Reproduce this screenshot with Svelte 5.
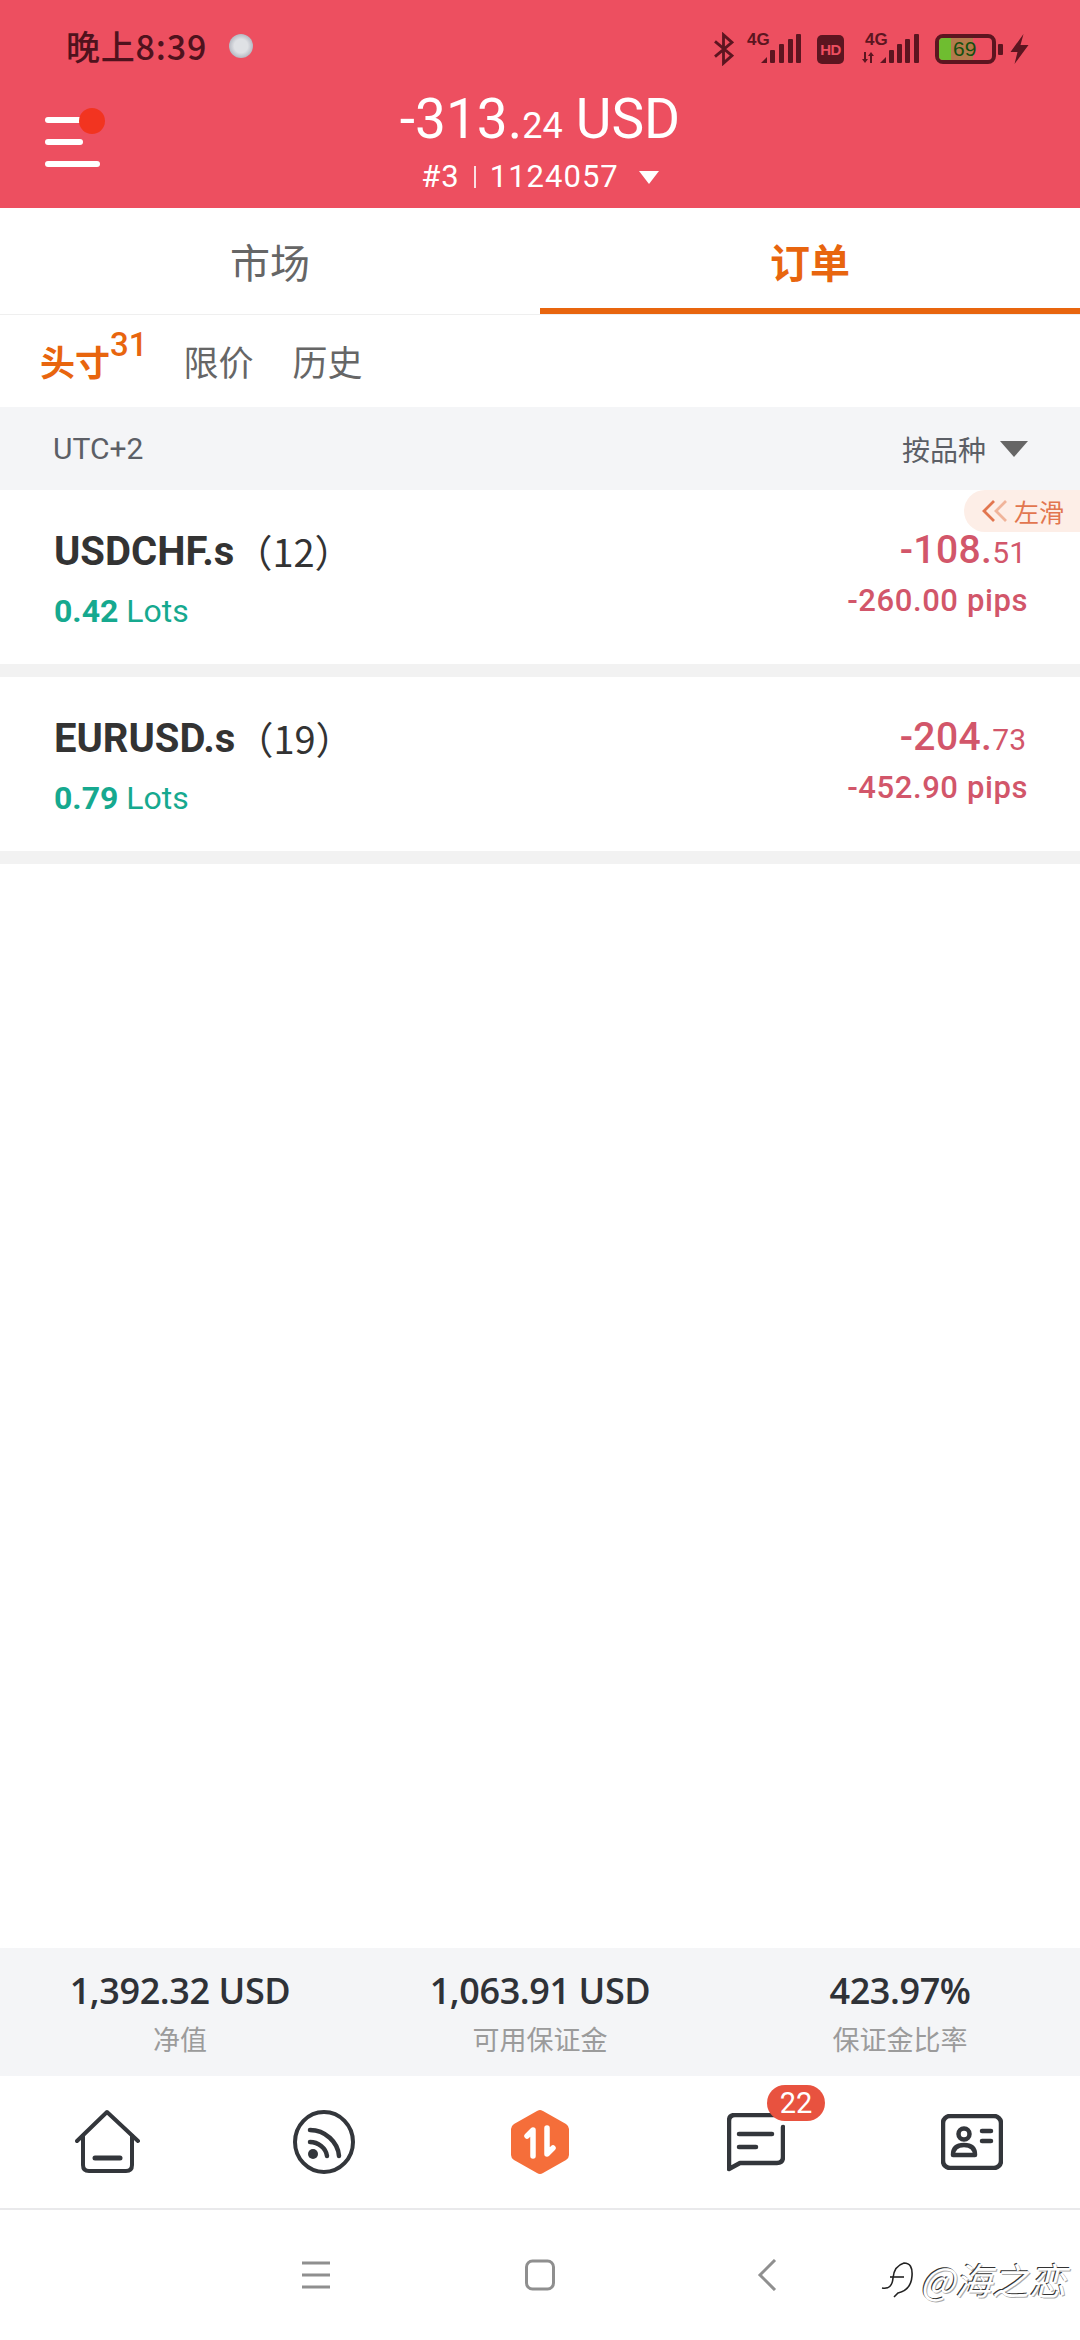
<script>
  const rows = [
    { sym: 'USDCHF.s', n: '12', lots: '0.42', big: '-108.', small: '51', pips: '-260.00 pips', swipe: true },
    { sym: 'EURUSD.s', n: '19', lots: '0.79', big: '-204.', small: '73', pips: '-452.90 pips', swipe: false }
  ];
  const stats = [
    { v: '1,392.32 USD', l: '净值' },
    { v: '1,063.91 USD', l: '可用保证金' },
    { v: '423.97%', l: '保证金比率' }
  ];
</script>

<div class="page">
  <header class="head">
    <div class="status">
      <div class="st-left">
        <span class="time">晚上8:39</span>
        <span class="bubble"></span>
      </div>
      <div class="st-right">
        <svg class="bt" width="22" height="36" viewBox="0 0 22 36"><path d="M2 10 L20 25 L11 33 V3 L20 11 L2 26" fill="none" stroke="#5c1520" stroke-width="3"/></svg>
        <div class="sig s1">
          <span class="g4">4G</span>
          <svg width="40" height="30" viewBox="0 0 40 30" fill="#5c1520"><path d="M0 29 L6 23 V29Z"/><rect x="9" y="16" width="5" height="13" rx="1"/><rect x="18" y="10" width="5" height="19" rx="1"/><rect x="27" y="5" width="5" height="24" rx="1"/><rect x="35" y="0" width="5" height="29" rx="1"/></svg>
        </div>
        <span class="hd">HD</span>
        <div class="sig s2">
          <span class="g4 g4b">4G</span>
          <svg width="58" height="30" viewBox="0 0 58 30" fill="#5c1520"><path d="M3 18h2v7h2l-3 4-3-4h2zM11 29H9v-7H7l3-4 3 4h-2z"/><path d="M19 29 L25 23 V29Z"/><rect x="28" y="16" width="5" height="13" rx="1"/><rect x="36" y="10" width="5" height="19" rx="1"/><rect x="44" y="5" width="5" height="24" rx="1"/><rect x="53" y="0" width="5" height="29" rx="1"/></svg>
        </div>
        <div class="batt">
          <div class="cell"><i class="fill"></i><i class="rest"></i><span>69</span></div>
          <i class="nub"></i>
        </div>
        <svg width="21" height="30" viewBox="0 0 20 30"><path d="M14 0 L1 18 H8 L5 30 L19 11 H11Z" fill="#5c1520"/></svg>
      </div>
    </div>
    <div class="bar">
      <div class="menu">
        <i class="m1"></i><i class="m2"></i><i class="m3"></i>
        <b class="dot"></b>
      </div>
      <div class="total"><span class="tb">-313.</span><span class="ts">24</span><span class="tb usd">USD</span></div>
      <div class="acct">
        <span>#3</span><i class="pipe"></i><span>1124057</span><i class="caret"></i>
      </div>
    </div>
  </header>

  <nav class="tabs">
    <div class="tab">市场</div>
    <div class="tab on">订单</div>
  </nav>

  <div class="sub">
    <span class="s-on">头寸<sup>31</sup></span>
    <span class="s">限价</span>
    <span class="s">历史</span>
  </div>

  <div class="filter">
    <span class="utc">UTC+2</span>
    <span class="by">按品种<i class="caret2"></i></span>
  </div>

  {#each rows as r}
    <div class="row">
      {#if r.swipe}
        <div class="swipe">
          <svg width="26" height="22" viewBox="0 0 26 22" fill="none" stroke-width="2.8"><path d="M12 1 L2 11 L12 21" stroke="#e2764f"/><path d="M24 1 L14 11 L24 21" stroke="#f0b49a"/></svg>
          <span>左滑</span>
        </div>
      {/if}
      <div class="r-left">
        <div class="name"><b>{r.sym}</b><span class="cnt">（{r.n}）</span></div>
        <div class="lots"><b>{r.lots}</b> Lots</div>
      </div>
      <div class="r-right">
        <div class="pl"><b>{r.big}</b><span>{r.small}</span></div>
        <div class="pips">{r.pips}</div>
      </div>
    </div>
    <div class="gap"></div>
  {/each}

  <div class="fill-space"></div>

  <div class="stats">
    {#each stats as s}
      <div class="stat"><b>{s.v}</b><span>{s.l}</span></div>
    {/each}
  </div>

  <div class="nav">
    <div class="nv">
      <svg width="66" height="66" viewBox="0 0 66 66" fill="none" stroke="#33363b" stroke-width="4" stroke-linecap="round" stroke-linejoin="round"><path d="M2 32 L32 3 L63 32"/><path d="M8 27 V56 Q8 62 14 62 H51 Q57 62 57 56 V27"/><path d="M20 49 H45" stroke-width="5"/></svg>
    </div>
    <div class="nv">
      <svg width="62" height="64" viewBox="0 0 62 64" fill="none" stroke="#33363b" stroke-linecap="round"><ellipse cx="31" cy="32" rx="29" ry="30" stroke-width="4"/><path d="M17 20 C32 20 45 32 46 46" stroke-width="4.5"/><path d="M17 32 C25 32 33 38 34 46" stroke-width="4.5"/><circle cx="20" cy="44" r="5" fill="#33363b" stroke="none"/></svg>
    </div>
    <div class="nv">
      <svg width="60" height="66" viewBox="0 0 60 66"><path d="M30 1 Q31 1 33 2 L56 15 Q59 17 59 20 V46 Q59 49 56 51 L33 64 Q30 66 27 64 L4 51 Q1 49 1 46 V20 Q1 17 4 15 L27 2 Q29 1 30 1Z" fill="#f56e3a"/><path d="M23 47 V21 L17 27 M37 19 V45 L43 39" fill="none" stroke="#fff" stroke-width="5.5" stroke-linecap="round" stroke-linejoin="round"/></svg>
    </div>
    <div class="nv">
      <div class="msg">
        <svg width="58" height="60" viewBox="0 0 58 60" fill="none" stroke="#33363b" stroke-width="4.5" stroke-linecap="round" stroke-linejoin="round"><path d="M48 2 H8 Q2 2 2 8 V56 L13 50 H50 Q56 50 56 44 V14"/><path d="M12 21 H45" /><path d="M12 34 H29"/></svg>
        <span class="badge">22</span>
      </div>
    </div>
    <div class="nv">
      <svg width="62" height="56" viewBox="0 0 62 56" fill="none" stroke="#33363b" stroke-width="4.5" stroke-linecap="round" stroke-linejoin="round"><rect x="2" y="2" width="58" height="52" rx="7"/><circle cx="23" cy="20" r="5.5"/><path d="M12 41 Q12 31 23 31 Q34 31 34 41Z"/><path d="M41 17 H50 M41 27 H50"/></svg>
    </div>
  </div>

  <div class="sys">
    <div class="keys">
      <div class="key"><svg width="30" height="28" viewBox="0 0 30 28" stroke="#8f8f8f" stroke-width="3"><path d="M1 2 H29 M1 14 H29 M1 26 H29"/></svg></div>
      <div class="key"><svg width="30" height="32" viewBox="0 0 30 32" fill="none" stroke="#8f8f8f" stroke-width="3"><rect x="1.5" y="2" width="27" height="28" rx="6"/></svg></div>
      <div class="key k3"><svg width="20" height="32" viewBox="0 0 20 32" fill="none" stroke="#8f8f8f" stroke-width="3"><path d="M18 1 L3 16 L18 31"/></svg></div>
    </div>
    <div class="mark">
      <svg width="34" height="38" viewBox="0 0 34 38" fill="none"><path d="M2 28 Q12 30 13 18 Q14 6 24 3 Q33 3 32 16 Q31 30 18 33 L14 37" stroke="#222" stroke-width="1.6"/><path d="M10 17 H24" stroke="#222" stroke-width="1.6"/></svg>
      <span>@海之恋</span>
    </div>
  </div>
</div>

<style>
  :global(body) { margin: 0; background: #fff; }
  .page {
    width: 1080px; height: 2340px; display: flex; flex-direction: column; overflow: hidden;
    font-family: Roboto, "Noto Sans CJK SC", sans-serif; background: #fff;
  }
  i { display: block; }

  .head { height: 208px; background: #ed4f60; flex: none; display: flex; flex-direction: column; }
  .status { height: 76px; padding: 25px 50px 0 66px; box-sizing: border-box; display: flex; justify-content: space-between; align-items: flex-start; }
  .st-left { display: flex; align-items: center; gap: 22px; }
  .time { font-size: 34px; line-height: 42px; font-weight: 500; color: #4f121d; letter-spacing: 0.8px; font-family: "Noto Sans CJK SC", sans-serif; }
  .bubble { width: 24px; height: 24px; border-radius: 50%; background: radial-gradient(circle, #dfe1e5 40%, #b9bcc5 68%, #ed4f60 100%); }
  .st-right { display: flex; align-items: center; height: 30px; margin-top: 9px; }
  .bt { width: 21px; height: 34px; margin-right: 13px; }
  .sig { position: relative; display: flex; justify-content: flex-end; align-items: flex-end; height: 30px; }
  .s1 { width: 54px; }
  .s2 { width: 58px; }
  .g4 { position: absolute; left: 0; top: -3px; font-size: 17px; line-height: 18px; font-weight: 700; color: #5c1520; font-family: "Liberation Sans", sans-serif; }
  .g4b { left: 4px; }
  .hd { width: 27px; height: 29px; border-radius: 5px; background: #5c1520; color: #ed4f60; font-size: 15px; font-weight: 700; line-height: 29px; text-align: center; margin: 0 17px 0 16px; font-family: "Liberation Sans", sans-serif; letter-spacing: -0.5px; }
  .batt { display: flex; align-items: center; margin: 0 6px 0 16px; }
  .cell { position: relative; width: 53px; height: 22px; border: 4px solid #5c1520; border-radius: 8px; display: flex; overflow: hidden; }
  .fill { width: 12px; background: #6fbd30; }
  .rest { width: 22px; background: #b37a4c; }
  .cell span { position: absolute; left: 14px; top: -2px; font-size: 21px; line-height: 26px; color: #14500f; font-family: "Liberation Sans", sans-serif; }
  .nub { width: 5px; height: 11px; background: #5c1520; margin-left: 2px; border-radius: 1px; }

  .bar { position: relative; flex: 1; display: flex; flex-direction: column; align-items: center; color: #fff; }
  .menu { position: absolute; left: 45px; top: 41px; width: 58px; display: flex; flex-direction: column; gap: 16px; }
  .menu i { height: 6px; border-radius: 3px; background: #fff; }
  .m1 { width: 42px; } .m2 { width: 38px; } .m3 { width: 55px; }
  .dot { position: absolute; left: 34px; top: -9px; width: 26px; height: 26px; border-radius: 50%; background: #f23420; }
  .total { margin-top: 14px; line-height: 58px; height: 58px; }
  .tb { font-size: 55px; font-weight: 400; }
  .ts { font-size: 36px; }
  .usd { margin-left: 13px; }
  .acct { display: flex; align-items: center; margin-top: 9px; font-size: 31px; line-height: 40px; letter-spacing: 1px; }
  .pipe { width: 2px; height: 22px; background: #fbdfe2; margin: 0 14px; }
  .caret { width: 0; height: 0; margin-left: 20px; border-left: 10px solid transparent; border-right: 10px solid transparent; border-top: 13px solid #fff; }

  .tabs { height: 107px; flex: none; display: flex; border-bottom: 1px solid #efefef; box-sizing: border-box; }
  .tab { flex: 1; text-align: center; font-size: 40px; line-height: 106px; color: #666; font-family: "Noto Sans CJK SC", sans-serif; box-sizing: border-box; }
  .tab.on { color: #e8650e; font-weight: 700; border-bottom: 6px solid #e8650e; }

  .sub { height: 92px; flex: none; box-sizing: border-box; padding: 0 0 2px 40px; display: flex; align-items: center; font-family: "Noto Sans CJK SC", sans-serif; font-size: 35px; color: #666; }
  .s-on { color: #e8650e; font-weight: 700; display: flex; margin-right: 36px; }
  .s-on sup { font-family: Roboto, sans-serif; font-size: 33px; font-weight: 500; line-height: 32px; margin-top: -6px; }
  .s { margin-right: 39px; }

  .filter { height: 83px; flex: none; background: #f4f5f7; display: flex; justify-content: space-between; align-items: center; padding: 0 52px 0 53px; color: #5c5f66; font-size: 30px; }
  .by { display: flex; align-items: center; font-family: "Noto Sans CJK SC", sans-serif; font-size: 28px; gap: 14px; }
  .caret2 { width: 0; height: 0; border-left: 14px solid transparent; border-right: 14px solid transparent; border-top: 16px solid #666; }

  .row { position: relative; height: 174px; flex: none; display: flex; justify-content: space-between; box-sizing: border-box; padding: 37px 52px 0 54px; }
  .gap { height: 13px; flex: none; background: #f2f2f2; }
  .swipe { position: absolute; right: 0; top: 0; width: 116px; height: 42px; background: #fdeee7; border-radius: 21px 0 0 21px; display: flex; align-items: center; padding-left: 18px; box-sizing: border-box; gap: 6px; font-size: 25px; color: #e2764f; font-family: "Noto Sans CJK SC", sans-serif; white-space: nowrap; }
  .name { font-size: 40px; line-height: 50px; color: #333; display: flex; align-items: center; }
  .name b { font-weight: 700; }
  .cnt { font-family: "Noto Sans CJK SC", Roboto, sans-serif; font-weight: 400; font-size: 38px; margin-top: -3px; }
  .lots { font-size: 32px; line-height: 40px; color: #16a98f; margin-top: 14px; }
  .lots b { font-weight: 700; }
  .r-right { text-align: right; color: #d2566a; }
  .pl { line-height: 50px; margin: -2px 2px 0 0; }
  .pl b { font-size: 39px; font-weight: 500; letter-spacing: 0.4px; }
  .pl span { font-size: 30px; }
  .pips { font-size: 31px; line-height: 40px; margin-top: -2px; font-weight: 500; letter-spacing: 0.6px; }

  .fill-space { flex: 1; }

  .stats { height: 128px; flex: none; background: #f4f5f7; display: grid; grid-template-columns: 1fr 1fr 1fr; box-sizing: border-box; padding-top: 20px; text-align: center; }
  .stat { display: flex; flex-direction: column; align-items: center; }
  .stat b { font-size: 36px; line-height: 46px; color: #2f3237; font-weight: 600; font-family: "Open Sans", sans-serif; letter-spacing: -0.4px; }
  .stat span { font-size: 27px; line-height: 40px; margin-top: 5px; color: #9b9b9b; font-family: "Noto Sans CJK SC", sans-serif; }

  .nav { height: 134px; flex: none; display: grid; grid-template-columns: repeat(5, 216px); border-bottom: 2px solid #e9e9eb; box-sizing: border-box; }
  .nv { display: flex; align-items: center; justify-content: center; }
  .msg { position: relative; display: flex; margin-top: 2px; }
  .badge { position: absolute; left: 40px; top: -28px; width: 58px; height: 36px; border-radius: 18px; background: #e8523f; color: #fff; font-size: 29px; line-height: 36px; text-align: center; }

  .sys { position: relative; height: 130px; flex: none; display: flex; align-items: center; justify-content: center; }
  .keys { display: flex; align-items: center; }
  .key { width: 224px; display: flex; justify-content: center; }
  .k3 svg { margin-left: 6px; }
  .mark { position: absolute; left: 880px; top: 42px; display: flex; align-items: center; gap: 6px; }
  .mark span { font-family: "Noto Sans CJK SC", sans-serif; font-size: 37px; font-style: italic; color: #fff; text-shadow: -1px -1px 0 #333, 1px 1px 0 #aaa; white-space: nowrap; }
</style>
